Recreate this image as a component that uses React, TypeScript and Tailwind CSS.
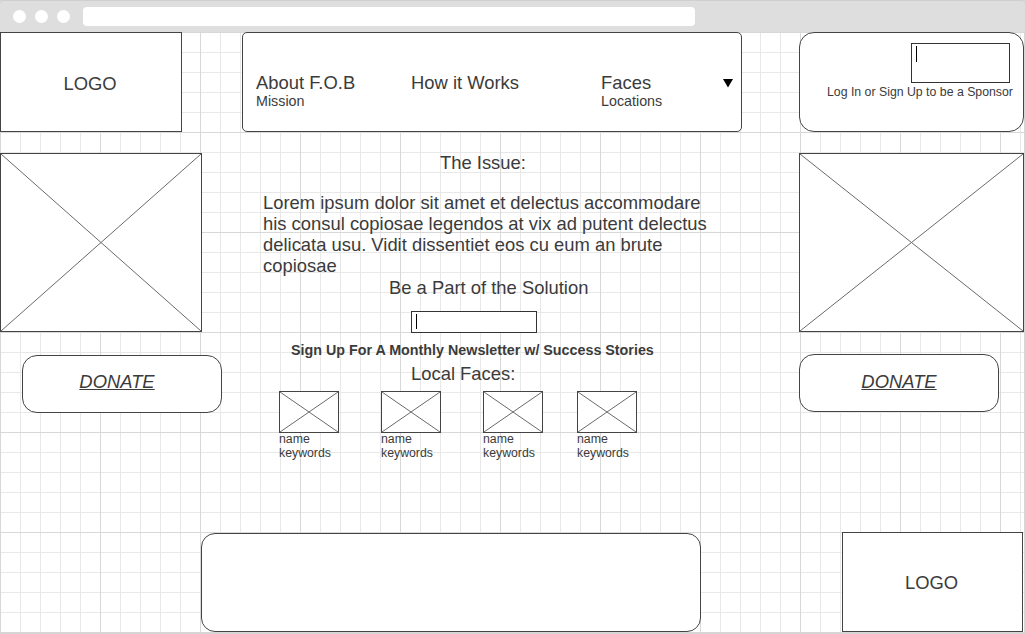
import React from 'react';

const faces = [
  { id: 1, ml: 'ml-[77px]' },
  { id: 2, ml: 'ml-[42px]' },
  { id: 3, ml: 'ml-[42px]' },
  { id: 4, ml: 'ml-[34px]' },
];

const Placeholder: React.FC<{ className?: string }> = ({ className = '' }) => (
  <div className={`border border-[#444] bg-white ${className}`}>
    <svg className="block w-full h-full" viewBox="0 0 100 100" preserveAspectRatio="none">
      <line x1="0" y1="0" x2="100" y2="100" stroke="#6a6a6a" strokeWidth="1" vectorEffect="non-scaling-stroke" />
      <line x1="100" y1="0" x2="0" y2="100" stroke="#6a6a6a" strokeWidth="1" vectorEffect="non-scaling-stroke" />
    </svg>
  </div>
);

const Donate: React.FC<{ className?: string }> = ({ className = '' }) => (
  <div className={`w-[200px] h-[58px] rounded-[15px] border border-[#444] bg-white flex items-center justify-center ${className}`}>
    <span className="italic underline text-[18.4px] leading-[21px]">DONATE</span>
  </div>
);

const App: React.FC = () => {
  return (
    <div className="w-[1025px] h-[634px] bg-[#d6d6d6] flex flex-col overflow-hidden font-['Liberation_Sans',Arial,sans-serif] text-[#3b3b3b]">
      {/* browser chrome */}
      <div className="h-[32px] shrink-0 bg-[#dedede] border-t border-[#cfcfcf] rounded-t-[4px] flex items-center">
        <div className="flex items-center gap-[9px] ml-[13px]">
          <span className="w-[13px] h-[13px] rounded-full bg-white" />
          <span className="w-[13px] h-[13px] rounded-full bg-white" />
          <span className="w-[13px] h-[13px] rounded-full bg-white" />
        </div>
        <div className="ml-[13px] w-[612px] h-[19px] -mt-[1px] rounded-[4px] bg-white" />
      </div>

      {/* canvas */}
      <div className="flex-1 mr-[1px] mb-[2px] flex flex-col bg-white bg-[linear-gradient(to_right,#d8d8d8_1px,transparent_1px),linear-gradient(to_bottom,#d8d8d8_1px,transparent_1px),linear-gradient(to_right,#e8e8e8_1px,transparent_1px),linear-gradient(to_bottom,#e8e8e8_1px,transparent_1px)] bg-size-[100px_100px,100px_100px,20px_20px,20px_20px]">
        {/* header row */}
        <div className="flex h-[100px]">
          <div className="w-[182px] h-[100px] border border-[#444] bg-white flex items-center justify-center pt-[2px] pr-[2px]">
            <span className="text-[18.4px] leading-[21px]">LOGO</span>
          </div>

          <div className="ml-[60px] w-[500px] h-[100px] rounded-[5px] border border-[#444] bg-white flex items-start pt-[39px] pl-[13px]">
            <div className="w-[155px]">
              <div className="text-[18.4px] leading-[21px]">About F.O.B</div>
              <div className="text-[14.3px] leading-[16px]">Mission</div>
            </div>
            <div className="w-[190px]">
              <div className="text-[18.4px] leading-[21px]">How it Works</div>
            </div>
            <div className="w-[122px]">
              <div className="text-[18.4px] leading-[21px]">Faces</div>
              <div className="text-[14.3px] leading-[16px]">Locations</div>
            </div>
            <svg className="mt-[7px]" width="10" height="9" viewBox="0 0 10 9">
              <polygon points="0,0 10,0 5,8.5" fill="#000" />
            </svg>
          </div>

          <div className="ml-[57px] w-[225px] h-[100px] rounded-[15px] border border-[#444] bg-white flex flex-col">
            <div className="ml-[111px] mt-[10px] w-[99px] h-[40px] border border-[#333] bg-white">
              <div className="ml-[4px] mt-[2px] w-px h-[16px] bg-black" />
            </div>
            <div className="ml-[27px] mt-[2px] text-[12.3px] leading-[14px] whitespace-nowrap">Log In or Sign Up to be a Sponsor</div>
          </div>
        </div>

        {/* body row */}
        <div className="flex items-start mt-[21px]">
          <div className="w-[202px] flex flex-col">
            <Placeholder className="w-[202px] h-[179px]" />
            <Donate className="ml-[22px] mt-[23px] pr-[10px] pb-[5px]" />
          </div>

          <div className="w-[597px] flex flex-col items-start -mt-[1px]">
            <div className="ml-[238px] text-[18.4px] leading-[21px]">The Issue:</div>
            <p className="ml-[61px] mt-[19px] w-[455px] text-[18.4px] leading-[21px]">
              Lorem ipsum dolor sit amet et delectus accommodare his consul copiosae legendos at vix ad putent delectus delicata usu. Vidit dissentiet eos cu eum an brute copiosae
            </p>
            <div className="ml-[187px] mt-[1px] text-[18.4px] leading-[21px]">Be a Part of the Solution</div>
            <div className="ml-[209px] mt-[13px] w-[126px] h-[22px] border border-[#333] bg-white">
              <div className="ml-[4px] mt-[2px] w-px h-[15px] bg-black" />
            </div>
            <div className="ml-[89px] mt-[9px] text-[14.3px] leading-[17px] font-bold whitespace-nowrap">
              Sign Up For A Monthly Newsletter w/ Success Stories
            </div>
            <div className="ml-[209px] mt-[4px] text-[18.4px] leading-[21px]">Local Faces:</div>
            <div className="flex mt-[7px]">
              {faces.map((f) => (
                <div key={f.id} className={`${f.ml} w-[60px]`}>
                  <Placeholder className="w-[60px] h-[42px]" />
                  <div className="-mt-[1px] text-[12.3px] leading-[14px]">name</div>
                  <div className="text-[12.3px] leading-[14px]">keywords</div>
                </div>
              ))}
            </div>
          </div>

          <div className="w-[225px] flex flex-col">
            <Placeholder className="w-[225px] h-[179px]" />
            <Donate className="mt-[22px] pb-[4px]" />
          </div>
        </div>

        {/* footer row */}
        <div className="mt-auto flex items-end">
          <div className="ml-[201px] w-[500px] h-[99px] rounded-[14px] border border-[#444] bg-white" />
          <div className="ml-[141px] w-[181px] h-[100px] border border-[#444] bg-white flex items-center justify-center pr-[2px]">
            <span className="text-[18.4px] leading-[21px]">LOGO</span>
          </div>
        </div>
      </div>
    </div>
  );
};

export default App;
